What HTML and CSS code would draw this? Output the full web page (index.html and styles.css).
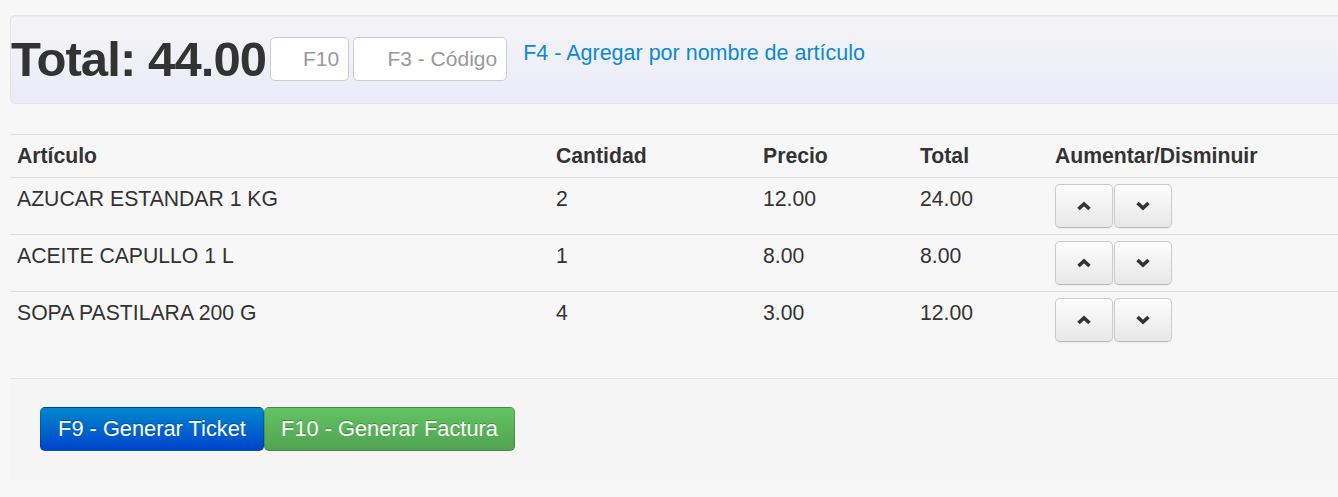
FILE: index.html
```html
<!DOCTYPE html>
<html lang="es">
<head>
<meta charset="utf-8">
<title>Venta</title>
<link rel="stylesheet" href="styles.css">
</head>
<body>
<div class="page">
  <div class="well">
    <h1 class="total">Total: 44.00</h1>
    <input class="field field-f10" type="text" placeholder="F10">
    <input class="field field-code" type="text" placeholder="F3 - Código">
    <a class="add-link" href="#">F4 - Agregar por nombre de artículo</a>
  </div>

  <table class="items">
    <colgroup>
      <col class="c1"><col class="c2"><col class="c3"><col class="c4"><col class="c5">
    </colgroup>
    <thead>
      <tr><th>Artículo</th><th>Cantidad</th><th>Precio</th><th>Total</th><th>Aumentar/Disminuir</th></tr>
    </thead>
    <tbody>
      <tr>
        <td>AZUCAR ESTANDAR 1 KG</td><td>2</td><td>12.00</td><td>24.00</td>
        <td><div class="btn-group">
          <button class="btn"><svg width="16" height="10" viewBox="0 0 16 10"><polyline points="2.5,8 8,3 13.5,8" fill="none" stroke="#333" stroke-width="3.6"/></svg></button>
          <button class="btn"><svg width="16" height="10" viewBox="0 0 16 10"><polyline points="2.5,2 8,7 13.5,2" fill="none" stroke="#333" stroke-width="3.6"/></svg></button>
        </div></td>
      </tr>
      <tr>
        <td>ACEITE CAPULLO 1 L</td><td>1</td><td>8.00</td><td>8.00</td>
        <td><div class="btn-group">
          <button class="btn"><svg width="16" height="10" viewBox="0 0 16 10"><polyline points="2.5,8 8,3 13.5,8" fill="none" stroke="#333" stroke-width="3.6"/></svg></button>
          <button class="btn"><svg width="16" height="10" viewBox="0 0 16 10"><polyline points="2.5,2 8,7 13.5,2" fill="none" stroke="#333" stroke-width="3.6"/></svg></button>
        </div></td>
      </tr>
      <tr>
        <td>SOPA PASTILARA 200 G</td><td>4</td><td>3.00</td><td>12.00</td>
        <td><div class="btn-group">
          <button class="btn"><svg width="16" height="10" viewBox="0 0 16 10"><polyline points="2.5,8 8,3 13.5,8" fill="none" stroke="#333" stroke-width="3.6"/></svg></button>
          <button class="btn"><svg width="16" height="10" viewBox="0 0 16 10"><polyline points="2.5,2 8,7 13.5,2" fill="none" stroke="#333" stroke-width="3.6"/></svg></button>
        </div></td>
      </tr>
    </tbody>
  </table>

  <div class="form-actions">
    <button class="action action-primary">F9 - Generar Ticket</button><button class="action action-success">F10 - Generar Factura</button>
  </div>
</div>
</body>
</html>
```

FILE: styles.css
```css
html, body {
  margin: 0;
  padding: 0;
  overflow: hidden;
}
body {
  background: #f7f7f7;
  font-family: "Liberation Sans", Arial, sans-serif;
  color: #333;
  font-size: 21px;
  line-height: 30px;
}
.page {
  padding: 15px 0 0 10px;
}
.well {
  display: flex;
  align-items: flex-start;
  height: 87px;
  border: 1px solid #e3e3e3;
  border-right: none;
  border-radius: 5px 0 0 5px;
  background: linear-gradient(#f4f4f6, #ebebf9);
  box-shadow: inset 0 1px 1px rgba(0,0,0,0.03);
}
.total {
  margin: 19px 0 0 0;
  font-size: 49px;
  line-height: 49px;
  font-weight: bold;
  letter-spacing: -0.9px;
  color: #333;
}
.field {
  box-sizing: border-box;
  height: 44px;
  margin-top: 21px;
  padding: 0 9px;
  border: 1px solid #ccc;
  border-radius: 5px;
  background: #fff;
  font-family: "Liberation Sans", Arial, sans-serif;
  font-size: 21px;
  text-align: right;
  color: #555;
}
.field::placeholder { color: #999; }
.field-f10 { width: 79px; margin-left: 4px; }
.field-code { width: 154px; margin-left: 4px; }
.add-link {
  margin: 22px 0 0 16px;
  font-size: 21.5px;
  line-height: 30px;
  color: #0a8bd0;
  text-decoration: none;
}
.items {
  width: 100%;
  margin: 30px 0 30px;
  border-collapse: collapse;
  table-layout: fixed;
}
.c1 { width: 539px; }
.c2 { width: 207px; }
.c3 { width: 157px; }
.c4 { width: 135px; }
.items th, .items td {
  padding: 6px 7px;
  border-top: 1px solid #ddd;
  text-align: left;
  vertical-align: top;
  line-height: 30px;
  font-size: 21.2px;
}
.items th { font-weight: bold; }
.btn-group { display: flex; gap: 1px; }
.btn {
  box-sizing: border-box;
  width: 58px;
  height: 44px;
  padding: 0;
  display: flex;
  align-items: center;
  justify-content: center;
  border: 1px solid #ccc;
  border-bottom-color: #b8b8b8;
  border-radius: 5px;
  background: linear-gradient(#fdfdfd, #e8e8e8);
  box-shadow: inset 0 1px 0 rgba(255,255,255,0.3), 0 1px 2px rgba(0,0,0,0.05);
}
.form-actions {
  padding: 28px 30px 28px;
  background: #f5f5f5;
  border-top: 1px solid #e5e5e5;
  display: flex;
}
.action {
  height: 44px;
  padding: 0 16px;
  border-radius: 5px;
  font-family: "Liberation Sans", Arial, sans-serif;
  font-size: 21.8px;
  color: #fff;
  text-shadow: 0 -1px 0 rgba(0,0,0,0.25);
  border: 1px solid rgba(0,0,0,0.15);
  border-bottom-color: rgba(0,0,0,0.3);
}
.action-primary {
  width: 224px;
  background: linear-gradient(#0088cc, #0044cc);
}
.action-success {
  width: 251px;
  background: linear-gradient(#62c462, #51a351);
}
```
